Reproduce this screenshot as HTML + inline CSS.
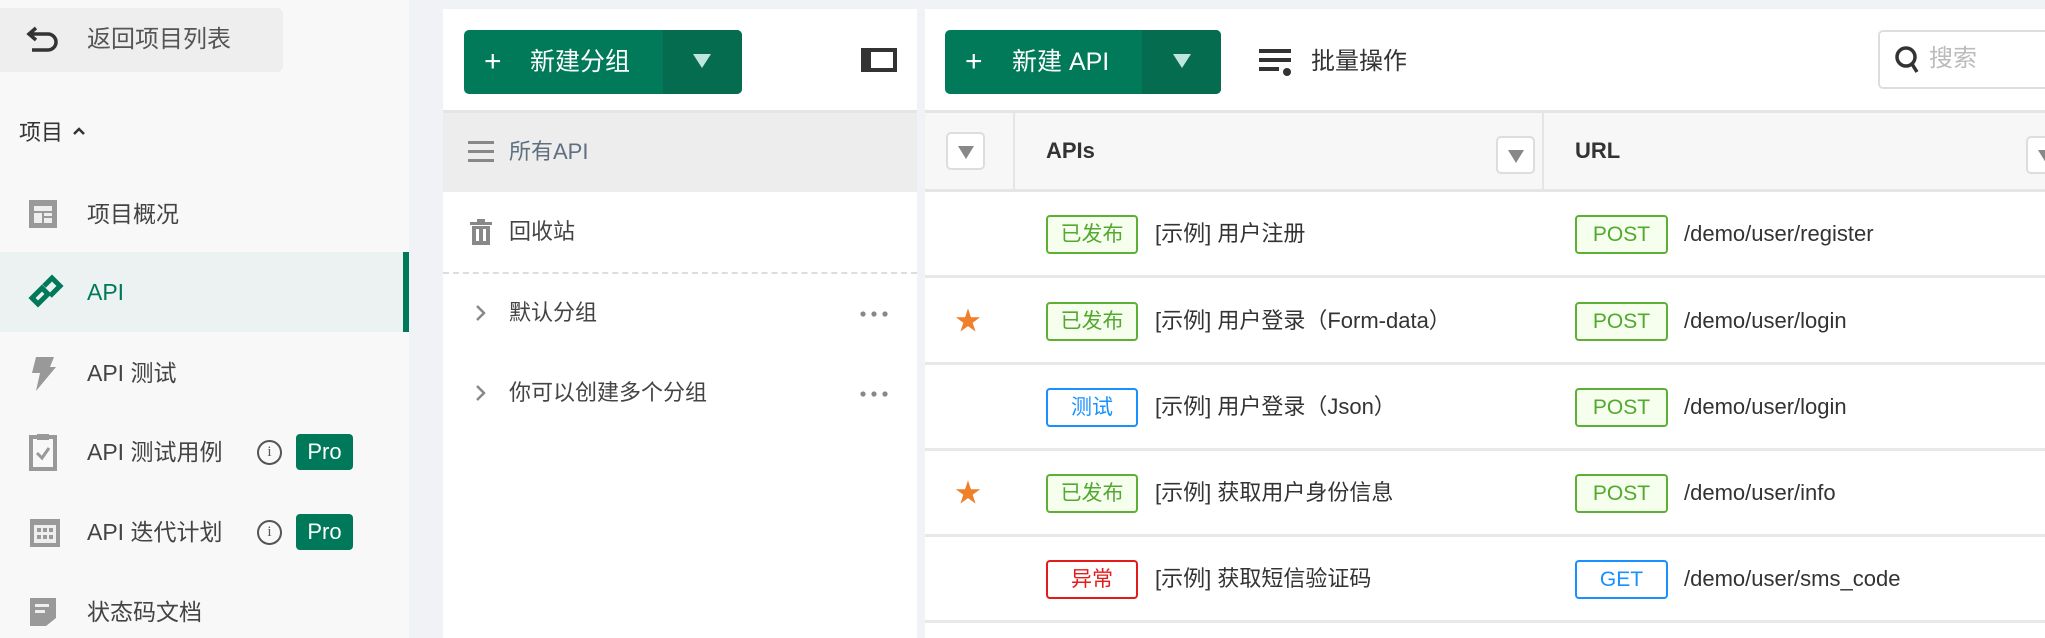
<!DOCTYPE html>
<html style="height:638px;overflow:hidden;background:#f0f2f5"><head><meta charset="utf-8"><style>
*{margin:0;padding:0;box-sizing:border-box}
body{width:2045px;height:638px;overflow:hidden;background:#f0f2f5;font-family:"Liberation Sans","Noto Sans CJK SC",sans-serif;color:#333;position:relative;line-height:1}
.a{position:absolute}
.side{left:0;top:0;width:409px;height:638px;background:#f8f8f8}
.mi{position:absolute;left:0;width:409px;height:80px;display:flex;align-items:center;font-size:23px;color:#444}
.mi .t{position:absolute;left:87px}
.mi svg{position:absolute;left:28px}
.pro{position:absolute;left:296px;width:57px;height:36px;background:#00785a;color:#fff;border-radius:4px;font-size:22px;display:flex;align-items:center;justify-content:center}
.info{position:absolute;left:257px;width:25px;height:25px;border:2px solid #555;border-radius:50%;font-size:15px;display:flex;align-items:center;justify-content:center;font-family:"Liberation Serif",serif;color:#555}
.btn{background:#007a58;border-radius:5px;color:#fff;font-size:25px;display:flex;align-items:center}
.tag{position:absolute;height:39px;border:2px solid;border-radius:4px;font-size:21px;display:flex;align-items:center;justify-content:center}
.g{color:#52a830;border-color:#5cb035;background:#f6ffed}
.b{color:#1890ff;border-color:#1890ff;background:#fff}
.r{color:#e31b1b;border-color:#e31b1b;background:#fff}
.row{position:absolute;left:925px;width:1120px;height:86px;border-bottom:3px solid #e8e8e8;background:#fff}
.row .n{position:absolute;left:230px;top:31px;font-size:22px;color:#333}
.row .u{position:absolute;left:759px;top:31px;font-size:22px;color:#333}
.row .s{position:absolute;left:30px;top:29px;color:#f07f2a;font-size:26px}
.dd{position:absolute;width:39px;height:38px;border:2px solid #ddd;border-radius:5px;background:#fff}
.dd:after{content:"";position:absolute;left:10px;top:12px;border-left:8px solid transparent;border-right:8px solid transparent;border-top:13px solid #888}
</style></head><body>
<div class="a side"></div>
<div class="a" style="left:0;top:8px;width:283px;height:64px;background:#eee;border-radius:0 6px 6px 0"></div>
<svg class="a" style="left:26px;top:25px" width="36" height="30" viewBox="0 0 36 30"><path d="M10 3 L3 9 L10 15 M3 9 H22 a8 8 0 0 1 0 16 H6" fill="none" stroke="#333" stroke-width="3.5"/></svg>
<div class="a" style="left:87px;top:28px;font-size:24px;color:#555">返回项目列表</div>
<div class="a" style="left:19px;top:122px;font-size:22px;color:#333">项目</div>
<svg class="a" style="left:73px;top:126px" width="12" height="10"><path d="M1 8 L6 3 L11 8" fill="none" stroke="#333" stroke-width="2.5"/></svg>

<div class="mi" style="top:174px"><svg width="30" height="30"><rect x="1" y="1" width="28" height="28" fill="#999"/><rect x="6" y="7" width="18" height="17" fill="#eee"/><rect x="6" y="12" width="18" height="2" fill="#999"/><rect x="14" y="12" width="2" height="12" fill="#999"/><rect x="14" y="17" width="10" height="2" fill="#999"/></svg><span class="t">项目概况</span></div>
<div class="mi" style="top:252px;background:#ecf1f1"><svg width="36" height="36" viewBox="0 0 36 36"><g fill="none" stroke="#00785a" stroke-width="5"><path d="M4 24 L14 14 L20 20 L10 30 Z"/><path d="M16 12 L24 4 L32 12 L22 22"/></g></svg><span class="t" style="color:#00785a">API</span><div class="a" style="right:0;top:0;width:6px;height:80px;background:#00785a"></div></div>
<div class="mi" style="top:333px"><svg width="30" height="36" viewBox="0 0 30 36"><path d="M8 2 H26 L22 12 H28 L8 36 L12 18 H4 Z" fill="#999"/></svg><span class="t">API 测试</span></div>
<div class="mi" style="top:412px"><svg width="30" height="38" viewBox="0 0 30 38"><rect x="3" y="4" width="24" height="32" fill="none" stroke="#999" stroke-width="4"/><rect x="9" y="1" width="12" height="6" fill="#999"/><path d="M9 20 L14 25 L21 15" stroke="#999" stroke-width="3" fill="none"/></svg><span class="t">API 测试用例</span><div class="info">i</div><div class="pro">Pro</div></div>
<div class="mi" style="top:492px"><svg width="34" height="34" viewBox="0 0 34 34"><rect x="2" y="4" width="30" height="28" fill="#999"/><rect x="6" y="10" width="22" height="18" fill="#eee"/><g fill="#999"><rect x="9" y="13" width="4" height="4"/><rect x="15" y="13" width="4" height="4"/><rect x="21" y="13" width="4" height="4"/><rect x="9" y="20" width="4" height="4"/><rect x="15" y="20" width="4" height="4"/><rect x="21" y="20" width="4" height="4"/></g></svg><span class="t">API 迭代计划</span><div class="info">i</div><div class="pro">Pro</div></div>
<div class="mi" style="top:572px"><svg width="30" height="32" viewBox="0 0 30 32"><path d="M2 2 H28 V22 L18 30 H2 Z" fill="#999"/><rect x="7" y="8" width="14" height="3" fill="#eee"/><rect x="7" y="14" width="10" height="3" fill="#eee"/></svg><span class="t">状态码文档</span></div>

<!-- panel 2 -->
<div class="a" style="left:443px;top:9px;width:474px;height:629px;background:#fff"></div>
<div class="a btn" style="left:464px;top:30px;width:278px;height:64px"><span style="position:absolute;left:20px;font-size:30px">+</span><span style="position:absolute;left:66px">新建分组</span><div class="a" style="left:199px;top:0;width:79px;height:64px;background:#066c4f;border-radius:0 5px 5px 0"></div><div class="a" style="left:229px;top:24px;border-left:9px solid transparent;border-right:9px solid transparent;border-top:14px solid #bfe6dc"></div></div>
<div class="a" style="left:861px;top:48px;width:36px;height:24px;border:4px solid #333;border-left-width:10px"></div>
<div class="a" style="left:443px;top:110px;width:474px;height:3px;background:#e5e5e5"></div>
<div class="a" style="left:443px;top:113px;width:474px;height:79px;background:#ededed"></div>
<svg class="a" style="left:468px;top:141px" width="26" height="22"><g fill="#888"><rect y="0" width="26" height="3"/><rect y="9" width="26" height="3"/><rect y="18" width="26" height="3"/></g></svg>
<div class="a" style="left:509px;top:141px;font-size:22px;color:#5f6f80">所有API</div>
<svg class="a" style="left:470px;top:219px" width="22" height="26"><rect x="0" y="3" width="22" height="3" fill="#888"/><rect x="7" y="0" width="8" height="3" fill="#888"/><rect x="2" y="7" width="18" height="19" fill="#888"/><rect x="6" y="10" width="3" height="12" fill="#fff"/><rect x="13" y="10" width="3" height="12" fill="#fff"/></svg>
<div class="a" style="left:509px;top:221px;font-size:22px;color:#444">回收站</div>
<div class="a" style="left:443px;top:272px;width:474px;border-top:2px dashed #ddd"></div>
<svg class="a" style="left:475px;top:304px" width="12" height="18"><path d="M2 2 L9 9 L2 16" fill="none" stroke="#888" stroke-width="2.5"/></svg>
<div class="a" style="left:509px;top:302px;font-size:22px;color:#444">默认分组</div>
<svg class="a" style="left:860px;top:311px" width="30" height="6"><g fill="#888"><circle cx="3" cy="3" r="2.6"/><circle cx="14" cy="3" r="2.6"/><circle cx="25" cy="3" r="2.6"/></g></svg>
<svg class="a" style="left:475px;top:384px" width="12" height="18"><path d="M2 2 L9 9 L2 16" fill="none" stroke="#888" stroke-width="2.5"/></svg>
<div class="a" style="left:509px;top:382px;font-size:22px;color:#444">你可以创建多个分组</div>
<svg class="a" style="left:860px;top:391px" width="30" height="6"><g fill="#888"><circle cx="3" cy="3" r="2.6"/><circle cx="14" cy="3" r="2.6"/><circle cx="25" cy="3" r="2.6"/></g></svg>

<!-- panel 3 -->
<div class="a" style="left:925px;top:9px;width:1120px;height:629px;background:#fff"></div>
<div class="a btn" style="left:945px;top:30px;width:276px;height:64px"><span style="position:absolute;left:20px;font-size:30px">+</span><span style="position:absolute;left:67px">新建 API</span><div class="a" style="left:197px;top:0;width:79px;height:64px;background:#066c4f;border-radius:0 5px 5px 0"></div><div class="a" style="left:228px;top:24px;border-left:9px solid transparent;border-right:9px solid transparent;border-top:14px solid #bfe6dc"></div></div>
<svg class="a" style="left:1259px;top:49px" width="34" height="28"><g fill="#333"><rect y="0" width="32" height="4"/><rect y="9" width="32" height="4"/><rect y="18" width="20" height="4"/><circle cx="28" cy="23" r="4"/></g></svg>
<div class="a" style="left:1311px;top:50px;font-size:24px;color:#333">批量操作</div>
<div class="a" style="left:1878px;top:30px;width:180px;height:59px;border:2px solid #ddd;border-radius:5px"></div>
<svg class="a" style="left:1895px;top:46px" width="26" height="28"><circle cx="11" cy="11" r="9" fill="none" stroke="#333" stroke-width="3.5"/><path d="M17 18 L22 26" stroke="#333" stroke-width="3.5"/></svg>
<div class="a" style="left:1929px;top:47px;font-size:24px;color:#bbb">搜索</div>
<div class="a" style="left:925px;top:110px;width:1120px;height:82px;background:#f7f7f7;border-top:3px solid #e5e5e5;border-bottom:3px solid #e5e5e5"></div>
<div class="a" style="left:1013px;top:113px;width:2px;height:76px;background:#e5e5e5"></div>
<div class="a" style="left:1542px;top:113px;width:2px;height:76px;background:#e5e5e5"></div>
<div class="dd" style="left:946px;top:132px"></div>
<div class="a" style="left:1046px;top:140px;font-size:22px;font-weight:bold;color:#333">APIs</div>
<div class="dd" style="left:1496px;top:136px"></div>
<div class="a" style="left:1575px;top:140px;font-size:22px;font-weight:bold;color:#333">URL</div>
<div class="dd" style="left:2026px;top:136px"></div>

<div class="row" style="top:192px"><div class="tag g" style="left:121px;top:23px;width:92px">已发布</div><span class="n">[示例] 用户注册</span><div class="tag g" style="left:650px;top:23px;width:93px">POST</div><span class="u">/demo/user/register</span></div>
<div class="row" style="top:279px"><span class="s">★</span><div class="tag g" style="left:121px;top:23px;width:92px">已发布</div><span class="n">[示例] 用户登录（Form-data）</span><div class="tag g" style="left:650px;top:23px;width:93px">POST</div><span class="u">/demo/user/login</span></div>
<div class="row" style="top:365px"><div class="tag b" style="left:121px;top:23px;width:92px">测试</div><span class="n">[示例] 用户登录（Json）</span><div class="tag g" style="left:650px;top:23px;width:93px">POST</div><span class="u">/demo/user/login</span></div>
<div class="row" style="top:451px"><span class="s">★</span><div class="tag g" style="left:121px;top:23px;width:92px">已发布</div><span class="n">[示例] 获取用户身份信息</span><div class="tag g" style="left:650px;top:23px;width:93px">POST</div><span class="u">/demo/user/info</span></div>
<div class="row" style="top:537px"><div class="tag r" style="left:121px;top:23px;width:92px">异常</div><span class="n">[示例] 获取短信验证码</span><div class="tag b" style="left:650px;top:23px;width:93px">GET</div><span class="u">/demo/user/sms_code</span></div>
</body></html>
